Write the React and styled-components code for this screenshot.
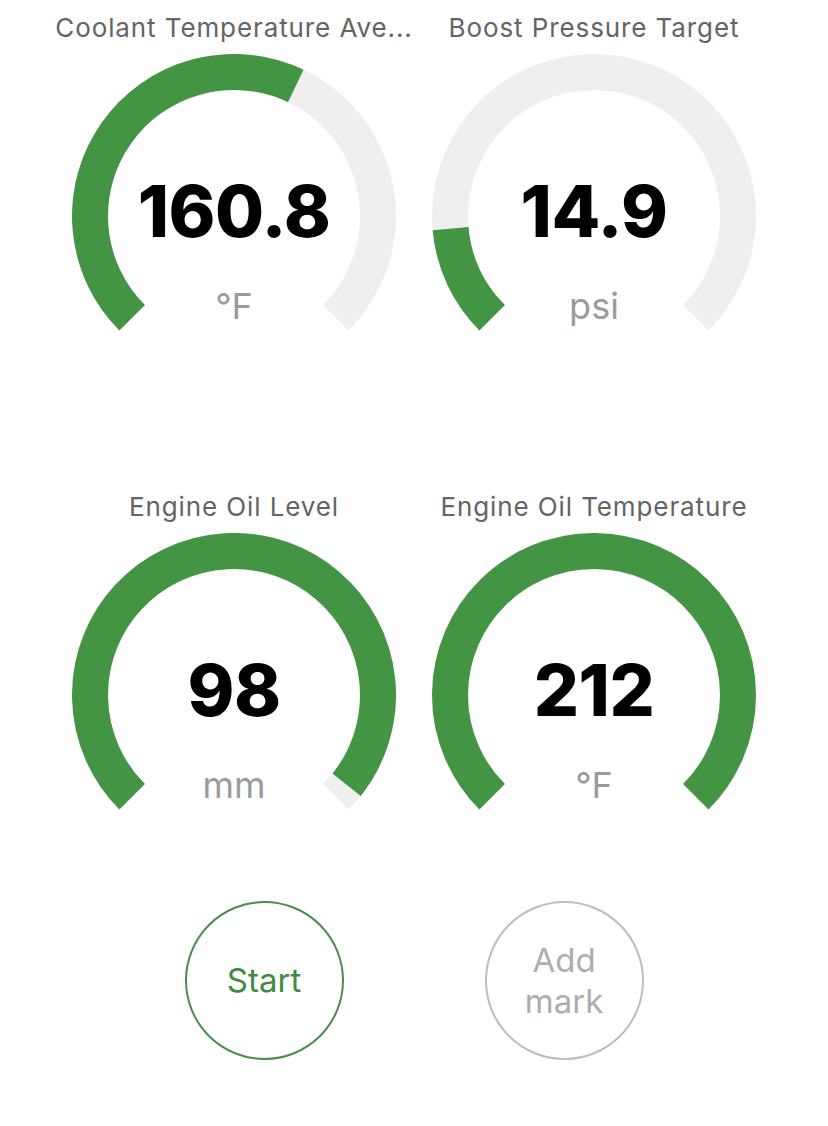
import React from "react";
import styled, { createGlobalStyle } from "styled-components";

const GREEN = "#449543";
const TRACK = "#efefef";

const Global = createGlobalStyle`
  html, body { margin: 0; padding: 0; background: #ffffff; }
  body { font-family: Inter, "Noto Sans", sans-serif; }
`;

const Page = styled.div`
  width: 828px;
  min-height: 1126px;
  box-sizing: border-box;
  padding-top: 10px;
  display: flex;
  flex-direction: column;
  align-items: center;
`;

const Grid = styled.div`
  display: grid;
  grid-template-columns: 360px 360px;
  row-gap: 158px;
`;

const Card = styled.div`
  display: flex;
  flex-direction: column;
  align-items: center;
  gap: 8px;
`;

const Title = styled.div`
  font-family: Inter, "Noto Sans", sans-serif;
  font-size: 26px;
  letter-spacing: 0.9px;
  line-height: 36px;
  color: #646464;
  white-space: nowrap;
  max-width: 360px;
  overflow: hidden;
  text-overflow: ellipsis;
`;

const Dial = styled.div`
  position: relative;
  width: 324px;
  height: 277px;
`;

const Readout = styled.div`
  position: absolute;
  left: 0;
  right: 0;
  text-align: center;
  top: ${(p) => p.$top}px;
  font-family: Inter, "Noto Sans", sans-serif;
  font-weight: ${(p) => (p.$big ? 800 : 400)};
  font-size: ${(p) => (p.$big ? 71 : 36)}px;
  letter-spacing: ${(p) => (p.$big ? "-0.5px" : "0")};
  line-height: 1;
  color: ${(p) => (p.$big ? "#000000" : "#9b9b9b")};
`;

const Buttons = styled.div`
  margin-top: 91px;
  display: flex;
  gap: 141px;
`;

const RoundButton = styled.button`
  width: 159px;
  height: 159px;
  border-radius: 50%;
  box-sizing: border-box;
  background: #ffffff;
  border: 2px solid ${(p) => (p.$active ? "#4b8c4e" : "#bdbdbd")};
  color: ${(p) => (p.$active ? "#3f8a43" : "#adadad")};
  font-family: Inter, "Noto Sans", sans-serif;
  font-size: 33px;
  line-height: 41px;
  padding: 0 20px;
  display: flex;
  align-items: center;
  justify-content: center;
  text-align: center;
  cursor: pointer;
`;

const CX = 162;
const CY = 162;
const R = 144;
const SW = 36;

function pt(deg) {
  const a = (deg * Math.PI) / 180;
  return [CX + R * Math.sin(a), CY - R * Math.cos(a)];
}

function arcPath(from, to) {
  const [x1, y1] = pt(from);
  const [x2, y2] = pt(to);
  const large = to - from > 180 ? 1 : 0;
  return `M ${x1.toFixed(2)} ${y1.toFixed(2)} A ${R} ${R} 0 ${large} 1 ${x2.toFixed(2)} ${y2.toFixed(2)}`;
}

function Gauge({ title, value, unit, fraction }) {
  const start = -135;
  const end = 135;
  const valEnd = start + 270 * fraction;
  return (
    <Card>
      <Title>{title}</Title>
      <Dial>
        <svg width="324" height="277" viewBox="0 0 324 277">
          <path d={arcPath(start, end)} fill="none" stroke={TRACK} strokeWidth={SW} />
          {fraction > 0 && (
            <path d={arcPath(start, valEnd)} fill="none" stroke={GREEN} strokeWidth={SW} />
          )}
        </svg>
        <Readout $big $top={122}>{value}</Readout>
        <Readout $top={234}>{unit}</Readout>
      </Dial>
    </Card>
  );
}

const gauges = [
  { title: "Coolant Temperature Ave...", value: "160.8", unit: "°F", fraction: 0.594 },
  { title: "Boost Pressure Target", value: "14.9", unit: "psi", fraction: 0.148 },
  { title: "Engine Oil Level", value: "98", unit: "mm", fraction: 0.976 },
  { title: "Engine Oil Temperature", value: "212", unit: "°F", fraction: 1 },
];

export default function App() {
  return (
    <>
      <Global />
      <Page>
        <Grid>
          {gauges.map((g) => (
            <Gauge key={g.title} {...g} />
          ))}
        </Grid>
        <Buttons>
          <RoundButton $active>Start</RoundButton>
          <RoundButton>Add mark</RoundButton>
        </Buttons>
      </Page>
    </>
  );
}
